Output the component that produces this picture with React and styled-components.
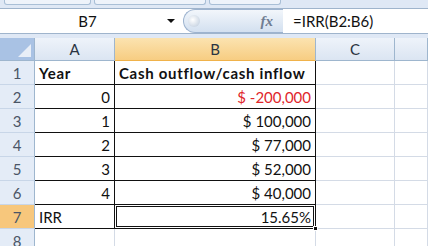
import { Fragment } from "react";
import styled, { createGlobalStyle } from "styled-components";

const GlobalStyle = createGlobalStyle`
  body {
    margin: 0;
    background: #ffffff;
    font-family: Lato, "Open Sans", sans-serif;
  }
`;

const Window = styled.div`
  width: 428px;
  height: 246px;
  overflow: hidden;
  background: #dfe8f5;
`;

const Ribbon = styled.div`
  height: 8px;
  display: flex;
  gap: 3px;
  padding: 0 4px;
  background: #dfe8f5;
`;

const RibbonTab = styled.span`
  flex: 0 0 ${(p) => p.$w}px;
  height: 4px;
  border: 1px solid #a9bfd6;
  border-top: none;
  border-radius: 0 0 3px 3px;
  background: #eef3fa;
`;

const FormulaBar = styled.div`
  height: 24px;
  display: flex;
  align-items: stretch;
  border-top: 1px solid #9fb4cc;
  border-bottom: 1px solid #9fb4cc;
  background: #ffffff;
`;

const NameBox = styled.div`
  width: 183px;
  display: flex;
  align-items: center;
  font-size: 15px;
  color: #111;

  b {
    flex: 1;
    text-align: center;
    font-weight: 400;
    padding-left: 8px;
  }

  i {
    width: 0;
    height: 0;
    margin-right: 8px;
    border-left: 4px solid transparent;
    border-right: 4px solid transparent;
    border-top: 4px solid #111;
  }
`;

const FxPill = styled.div`
  width: 100px;
  position: relative;
  display: flex;
  align-items: center;
  justify-content: flex-end;
  padding-right: 10px;
  box-sizing: border-box;
  border-radius: 12px 0 0 12px;
  border: 1px solid #9db3cf;
  border-right: none;
  background: linear-gradient(#f2f6fb, #d3e0f0);
  font-family: "Liberation Serif", serif;
  font-style: italic;
  font-weight: 700;
  font-size: 15px;
  color: #6f7d92;

  &::before {
    content: "";
    position: absolute;
    left: 4px;
    top: 5px;
    width: 12px;
    height: 12px;
    border-radius: 50%;
    background: radial-gradient(circle at 40% 40%, #ffffff, #b9c8da);
  }
`;

const Formula = styled.div`
  flex: 1;
  display: flex;
  align-items: center;
  padding-left: 10px;
  font-size: 15px;
  color: #111;
`;

const Gap = styled.div`
  height: 4px;
  background: #dfe8f5;
`;

const Grid = styled.div`
  display: grid;
  grid-template-columns: 35px 80px 201px 79px 1fr;
  grid-template-rows: 23px repeat(8, 24px);
  background: #ffffff;
  font-size: 15px;
`;

const Corner = styled.div`
  position: relative;
  background: #a9c2e4;
  border-right: 1px solid #9eb6ce;
  border-bottom: 1px solid #9eb6ce;

  &::after {
    content: "";
    position: absolute;
    right: 3px;
    bottom: 3px;
    border-left: 13px solid transparent;
    border-bottom: 13px solid #e8eef7;
  }
`;

const ColHead = styled.div`
  display: flex;
  align-items: center;
  justify-content: center;
  color: #2a3442;
  border-right: 1px solid #9eb6ce;
  border-bottom: 1px solid ${(p) => (p.$active ? "#f0b24a" : "#9eb6ce")};
  background: ${(p) =>
    p.$active
      ? "linear-gradient(#fbe3b0, #f7cd82)"
      : "linear-gradient(#eef3fa, #dbe5f2)"};
`;

const RowHead = styled.div`
  display: flex;
  align-items: center;
  justify-content: center;
  color: #4a5566;
  border-right: 1px solid #9eb6ce;
  border-bottom: 1px solid #c8d6e8;
  background: ${(p) => (p.$active ? "#f7c77c" : "#e4ecf7")};
`;

const Cell = styled.div`
  display: flex;
  align-items: center;
  justify-content: ${(p) => (p.$right ? "flex-end" : "flex-start")};
  padding: 0 4px;
  box-sizing: border-box;
  white-space: nowrap;
  font-weight: ${(p) => (p.$bold ? 700 : 400)};
  letter-spacing: ${(p) => (p.$bold ? "0.7px" : "normal")};
  color: ${(p) => (p.$red ? "#e0262b" : "#111")};
  border-right: 1px solid ${(p) => (p.$boxed ? "#111" : "#d4dbe6")};
  border-bottom: 1px solid ${(p) => (p.$boxed ? "#111" : "#d4dbe6")};
`;

const Selected = styled(Cell)`
  position: relative;
  border: 1px solid #111;
  border-top: none;
  border-left: none;
  box-shadow: inset 0 0 0 1px #ffffff, inset 0 0 0 2px #111;

  &::after {
    content: "";
    position: absolute;
    right: -3px;
    bottom: -3px;
    width: 5px;
    height: 5px;
    background: #111;
    border: 1px solid #fff;
    box-sizing: border-box;
  }
`;

const rows = [
  { n: 1, a: "Year", b: "Cash outflow/cash inflow", bold: true },
  { n: 2, a: "0", b: "$ -200,000", red: true },
  { n: 3, a: "1", b: "$ 100,000" },
  { n: 4, a: "2", b: "$ 77,000" },
  { n: 5, a: "3", b: "$ 52,000" },
  { n: 6, a: "4", b: "$ 40,000" },
];

const App = () => (
  <Window>
    <GlobalStyle />
    <Ribbon>
      <RibbonTab $w={85} />
      <RibbonTab $w={110} />
      <RibbonTab $w={70} />
    </Ribbon>
    <FormulaBar>
      <NameBox>
        <b>B7</b>
        <i />
      </NameBox>
      <FxPill>fx</FxPill>
      <Formula>=IRR(B2:B6)</Formula>
    </FormulaBar>
    <Gap />
    <Grid>
      <Corner />
      <ColHead>A</ColHead>
      <ColHead $active>B</ColHead>
      <ColHead>C</ColHead>
      <ColHead />
      {rows.map((r) => (
        <Fragment key={r.n}>
          <RowHead>{r.n}</RowHead>
          <Cell $boxed $bold={r.bold} $right={!r.bold}>
            {r.a}
          </Cell>
          <Cell $boxed $bold={r.bold} $right={!r.bold} $red={r.red}>
            {r.b}
          </Cell>
          <Cell />
          <Cell />
        </Fragment>
      ))}
      <RowHead $active>7</RowHead>
      <Cell $boxed>IRR</Cell>
      <Selected $right>15.65%</Selected>
      <Cell />
      <Cell />
      <RowHead>8</RowHead>
      <Cell />
      <Cell />
      <Cell />
      <Cell />
    </Grid>
  </Window>
);

export default App;
